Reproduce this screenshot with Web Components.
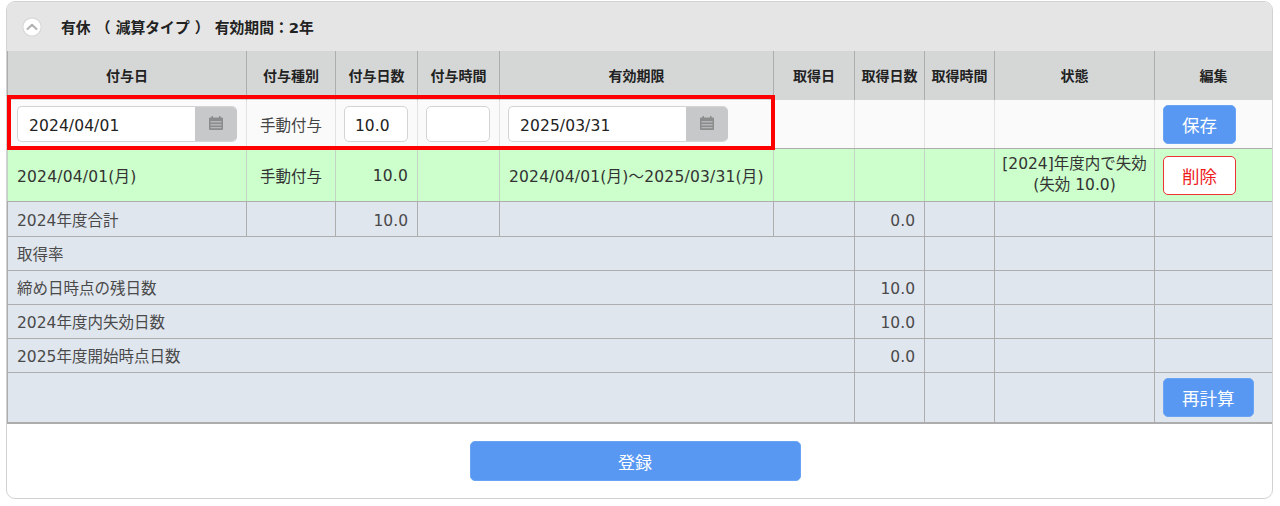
<!DOCTYPE html>
<html lang="ja">
<head>
<meta charset="utf-8">
<title>有休</title>
<style>
  html, body { margin: 0; background: #fff; }
  body { padding: 1px 7px 0 6px; font-family: "DejaVu Sans", "Noto Sans CJK JP", sans-serif; font-size: 15px; color: #333; }
</style>
</head>
<body>
<leave-panel title="有休 （ 減算タイプ ） 有効期間：2年"></leave-panel>

<template id="leave-panel-tpl">
  <style>
    :host { display: block; position: relative; height: 498px; box-sizing: border-box; border: 1px solid #d2d2d2; border-radius: 9px; overflow: hidden; background: #fff; }
    .head { height: 49px; background: #e5e5e5; display: flex; align-items: center; gap: 19px; padding-left: 15px; font-weight: 700; font-size: 14.8px; color: #222; }
    .toggle { width: 20px; height: 20px; display: block; }
    .foot { display: flex; justify-content: center; padding: 17px 9px 0 0; }
    .mark { position: absolute; left: 0; top: 93px; width: 768px; height: 55px; box-sizing: border-box; border: 4px solid #f00; pointer-events: none; }
  </style>
  <div class="head">
    <svg class="toggle" viewBox="0 0 20 20">
      <circle cx="10" cy="10" r="9.2" fill="#fff" stroke="#d8d8d8" stroke-width="1.2"/>
      <path d="M5.6 12 L10 7.8 L14.4 12" fill="none" stroke="#b5b5b5" stroke-width="2.2" stroke-linecap="round" stroke-linejoin="round"/>
    </svg>
    <span id="title"></span>
  </div>
  <leave-table></leave-table>
  <div class="foot"><ui-button wide>登録</ui-button></div>
  <div class="mark"></div>
</template>

<template id="leave-table-tpl">
  <style>
    :host { display: block; }
    table { border-collapse: collapse; table-layout: fixed; width: 1265px; font-size: 15.5px; }
    th, td { border: 1px solid #adadad; padding: 0 9px; overflow: hidden; white-space: nowrap; }
    th { background: #d5d7d7; font-size: 14px; font-weight: 700; color: #222; text-align: center; height: 49px; padding: 0 0 2px; border-top: 0; border-bottom: 0; box-sizing: border-box; }
    td { color: #444; }
    .edit td { background: #fafafa; height: 48px; border-color: #e2e2e2; border-top: 0; border-bottom-color: #adadad; padding: 0 8px; }
    .edit td:first-child { padding-left: 9px; }
    .grant td { background: #ccffcc; height: 52px; border-color: #c4d4c4; border-bottom-color: #adadad; color: #333; letter-spacing: .2px; }
    .sum td { background: #e0e6ee; height: 33px; color: #4a4a4a; }
    .sum td[colspan] { padding-bottom: 2px; height: 31px; }
    .sum.first td { height: 34px; }
    .last td { background: #e0e6ee; height: 49px; border-bottom-width: 2px; }
    .edit .mid, .grant .mid { text-align: center; padding: 0; letter-spacing: 0; }
    .num { text-align: right; }
    .sum td.num { padding-top: 3px; height: 30px; }
    .sum.first td.num { height: 31px; }
    .grant td.num { padding-top: 2px; height: 50px; }
    .state { text-align: center; line-height: 21px; }
    .grant .state { padding: 0; letter-spacing: 0; }
    .edit .btn, .grant .btn, .last .btn { padding: 0 0 0 8px; }
  </style>
  <table>
    <colgroup>
      <col style="width:239px"><col style="width:89px"><col style="width:82px"><col style="width:82px">
      <col style="width:274px"><col style="width:81px"><col style="width:70px"><col style="width:70px">
      <col style="width:160px"><col style="width:118px">
    </colgroup>
    <tr>
      <th>付与日</th><th>付与種別</th><th>付与日数</th><th>付与時間</th><th>有効期限</th>
      <th>取得日</th><th>取得日数</th><th>取得時間</th><th>状態</th><th>編集</th>
    </tr>
    <tr class="edit">
      <td><date-field value="2024/04/01"></date-field></td>
      <td class="mid">手動付与</td>
      <td><text-field value="10.0"></text-field></td>
      <td><text-field></text-field></td>
      <td><date-field value="2025/03/31"></date-field></td>
      <td></td><td></td><td></td><td></td>
      <td class="btn"><ui-button>保存</ui-button></td>
    </tr>
    <tr class="grant">
      <td>2024/04/01(月)</td>
      <td class="mid">手動付与</td>
      <td class="num">10.0</td>
      <td></td>
      <td>2024/04/01(月)～2025/03/31(月)</td>
      <td></td><td></td><td></td>
      <td class="state">[2024]年度内で失効<br>(失効 10.0)</td>
      <td class="btn"><ui-button danger>削除</ui-button></td>
    </tr>
    <tr class="sum first">
      <td>2024年度合計</td><td></td><td class="num">10.0</td><td></td><td></td><td></td>
      <td class="num">0.0</td><td></td><td></td><td></td>
    </tr>
    <tr class="sum">
      <td colspan="6">取得率</td><td></td><td></td><td></td><td></td>
    </tr>
    <tr class="sum">
      <td colspan="6">締め日時点の残日数</td><td class="num">10.0</td><td></td><td></td><td></td>
    </tr>
    <tr class="sum">
      <td colspan="6">2024年度内失効日数</td><td class="num">10.0</td><td></td><td></td><td></td>
    </tr>
    <tr class="sum">
      <td colspan="6">2025年度開始時点日数</td><td class="num">0.0</td><td></td><td></td><td></td>
    </tr>
    <tr class="last">
      <td colspan="6"></td><td></td><td></td><td></td>
      <td class="btn"><ui-button>再計算</ui-button></td>
    </tr>
  </table>
</template>

<template id="date-field-tpl">
  <style>
    :host { display: flex; width: 220px; height: 36px; box-sizing: border-box; border: 1px solid #d4d4d4; border-right: 0; border-radius: 5px; overflow: hidden; background: #fff; }
    .val { flex: 1; padding-left: 11px; font-size: 15.5px; letter-spacing: .1px; line-height: 38px; color: #222; }
    .cal { width: 42px; background: #c6c8ca; display: flex; align-items: center; justify-content: center; padding-bottom: 3px; box-sizing: border-box; }
    svg { width: 16px; height: 16px; display: block; }
  </style>
  <span class="val"></span>
  <span class="cal">
    <svg viewBox="0 0 16 16">
      <path fill="#8b8d8d" d="M3.5 1h1.5v1.5h6V1h1.500v1.500H14a1 1 0 0 1 1 1V14a1 1 0 0 1-1 1H2a1 1 0 0 1-1-1V3.500a1 1 0 0 1 1-1h1.500z"/>
      <path fill="#b4b6b7" d="M2.500 6h11v1.500h-11zM2.500 9h11v1.500h-11zM2.500 12h11v1.300h-11z"/>
    </svg>
  </span>
</template>

<template id="text-field-tpl">
  <style>
    :host { display: block; width: 64px; height: 36px; box-sizing: border-box; border: 1px solid #d4d4d4; border-radius: 5px; background: #fff; padding-left: 10px; font-size: 15.5px; line-height: 38px; color: #222; }
  </style>
  <span class="val"></span>
</template>

<template id="ui-button-tpl">
  <style>
    :host { display: inline-flex; align-items: center; justify-content: center; box-sizing: border-box; height: 39px; min-width: 73px; padding: 0 18px; border-radius: 5px; background: #5898f2; color: #fff; font-size: 17.5px; border: 1px solid #6aa4f4; vertical-align: middle; letter-spacing: 0; }
    :host([danger]) { background: #fff; color: #ee1c1c; border-color: #ee3333; }
    :host([wide]) { width: 331px; height: 40px; font-size: 17px; }
  </style>
  <slot></slot>
</template>

<script>
  function mount(host, id) {
    const root = host.attachShadow({ mode: "open" });
    root.appendChild(document.getElementById(id).content.cloneNode(true));
    return root;
  }

  class LeavePanel extends HTMLElement {
    constructor() {
      super();
      mount(this, "leave-panel-tpl");
    }
    connectedCallback() {
      this.shadowRoot.querySelector("#title").textContent = this.getAttribute("title") || "";
    }
  }

  class LeaveTable extends HTMLElement {
    constructor() {
      super();
      mount(this, "leave-table-tpl");
    }
  }

  class ValueField extends HTMLElement {
    connectedCallback() {
      this.shadowRoot.querySelector(".val").textContent = this.getAttribute("value") || "";
    }
  }

  class DateField extends ValueField {
    constructor() {
      super();
      mount(this, "date-field-tpl");
    }
  }

  class TextField extends ValueField {
    constructor() {
      super();
      mount(this, "text-field-tpl");
    }
  }

  class UiButton extends HTMLElement {
    constructor() {
      super();
      mount(this, "ui-button-tpl");
    }
  }

  customElements.define("date-field", DateField);
  customElements.define("text-field", TextField);
  customElements.define("ui-button", UiButton);
  customElements.define("leave-table", LeaveTable);
  customElements.define("leave-panel", LeavePanel);
</script>
</body>
</html>
